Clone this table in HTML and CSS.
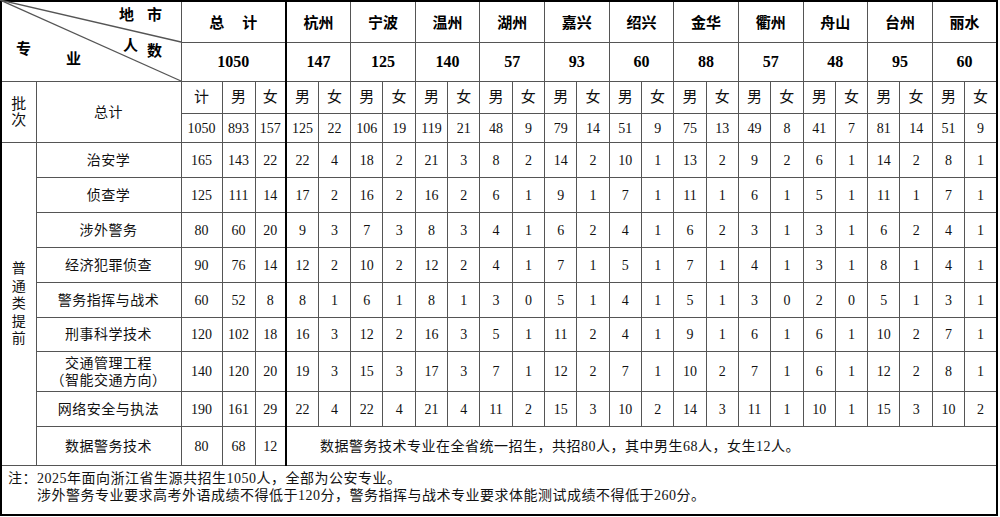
FILE: index.html
```html
<!DOCTYPE html>
<html lang="zh-CN">
<head>
<meta charset="utf-8">
<title>2025年浙江招生计划</title>
<link rel="stylesheet" href="styles.css">
</head>
<body>
<table class="plan">
<colgroup>
<col class="c-batch"><col class="c-major"><col class="c-tot"><col class="c-m"><col class="c-f">
<col span="22">
</colgroup>
<tr class="r-h1">
<td class="diag" colspan="2" rowspan="2">
<div class="diag-box">
<svg class="diag-lines" width="184" height="84" viewBox="0 0 184 84"><line x1="0" y1="0" x2="181" y2="42"/><line x1="0" y1="0" x2="181" y2="81"/></svg>
<span class="dl dl-di">地</span><span class="dl dl-shi">市</span>
<span class="dl dl-ren">人</span><span class="dl dl-shu">数</span>
<span class="dl dl-zhuan">专</span><span class="dl dl-ye">业</span>
</div>
</td>
<td class="hname sep" colspan="3">总<span class="gap"></span>计</td>
<td class="hname" colspan="2">杭州</td>
<td class="hname" colspan="2">宁波</td>
<td class="hname" colspan="2">温州</td>
<td class="hname" colspan="2">湖州</td>
<td class="hname" colspan="2">嘉兴</td>
<td class="hname" colspan="2">绍兴</td>
<td class="hname" colspan="2">金华</td>
<td class="hname" colspan="2">衢州</td>
<td class="hname" colspan="2">舟山</td>
<td class="hname" colspan="2">台州</td>
<td class="hname" colspan="2">丽水</td>
</tr>
<tr class="r-h2">
<td class="hnum sep" colspan="3">1050</td>
<td class="hnum" colspan="2">147</td>
<td class="hnum" colspan="2">125</td>
<td class="hnum" colspan="2">140</td>
<td class="hnum" colspan="2">57</td>
<td class="hnum" colspan="2">93</td>
<td class="hnum" colspan="2">60</td>
<td class="hnum" colspan="2">88</td>
<td class="hnum" colspan="2">57</td>
<td class="hnum" colspan="2">48</td>
<td class="hnum" colspan="2">95</td>
<td class="hnum" colspan="2">60</td>
</tr>
<tr class="r-h3">
<td class="batch" rowspan="2"><div class="vert vert-b">批次</div></td>
<td class="major" rowspan="2">总计</td>
<td class="sub">计</td><td class="sub">男</td><td class="sub sep">女</td>
<td class="sub">男</td><td class="sub">女</td>
<td class="sub">男</td><td class="sub">女</td>
<td class="sub">男</td><td class="sub">女</td>
<td class="sub">男</td><td class="sub">女</td>
<td class="sub">男</td><td class="sub">女</td>
<td class="sub">男</td><td class="sub">女</td>
<td class="sub">男</td><td class="sub">女</td>
<td class="sub">男</td><td class="sub">女</td>
<td class="sub">男</td><td class="sub">女</td>
<td class="sub">男</td><td class="sub">女</td>
<td class="sub">男</td><td class="sub">女</td>
</tr>
<tr class="r-h4">
<td>1050</td><td>893</td><td class="sep">157</td>
<td>125</td><td>22</td><td>106</td><td>19</td><td>119</td><td>21</td><td>48</td><td>9</td><td>79</td><td>14</td><td>51</td><td>9</td><td>75</td><td>13</td><td>49</td><td>8</td><td>41</td><td>7</td><td>81</td><td>14</td><td>51</td><td>9</td>
</tr>
<tr class="r-b">
<td class="batch" rowspan="9"><div class="vert">普通类提前</div></td>
<td class="major">治安学</td>
<td>165</td><td>143</td><td class="sep">22</td>
<td>22</td><td>4</td><td>18</td><td>2</td><td>21</td><td>3</td><td>8</td><td>2</td><td>14</td><td>2</td><td>10</td><td>1</td><td>13</td><td>2</td><td>9</td><td>2</td><td>6</td><td>1</td><td>14</td><td>2</td><td>8</td><td>1</td>
</tr>
<tr class="r-b">
<td class="major">侦查学</td>
<td>125</td><td>111</td><td class="sep">14</td>
<td>17</td><td>2</td><td>16</td><td>2</td><td>16</td><td>2</td><td>6</td><td>1</td><td>9</td><td>1</td><td>7</td><td>1</td><td>11</td><td>1</td><td>6</td><td>1</td><td>5</td><td>1</td><td>11</td><td>1</td><td>7</td><td>1</td>
</tr>
<tr class="r-b">
<td class="major">涉外警务</td>
<td>80</td><td>60</td><td class="sep">20</td>
<td>9</td><td>3</td><td>7</td><td>3</td><td>8</td><td>3</td><td>4</td><td>1</td><td>6</td><td>2</td><td>4</td><td>1</td><td>6</td><td>2</td><td>3</td><td>1</td><td>3</td><td>1</td><td>6</td><td>2</td><td>4</td><td>1</td>
</tr>
<tr class="r-b">
<td class="major">经济犯罪侦查</td>
<td>90</td><td>76</td><td class="sep">14</td>
<td>12</td><td>2</td><td>10</td><td>2</td><td>12</td><td>2</td><td>4</td><td>1</td><td>7</td><td>1</td><td>5</td><td>1</td><td>7</td><td>1</td><td>4</td><td>1</td><td>3</td><td>1</td><td>8</td><td>1</td><td>4</td><td>1</td>
</tr>
<tr class="r-b">
<td class="major">警务指挥与战术</td>
<td>60</td><td>52</td><td class="sep">8</td>
<td>8</td><td>1</td><td>6</td><td>1</td><td>8</td><td>1</td><td>3</td><td>0</td><td>5</td><td>1</td><td>4</td><td>1</td><td>5</td><td>1</td><td>3</td><td>0</td><td>2</td><td>0</td><td>5</td><td>1</td><td>3</td><td>1</td>
</tr>
<tr class="r-b6">
<td class="major">刑事科学技术</td>
<td>120</td><td>102</td><td class="sep">18</td>
<td>16</td><td>3</td><td>12</td><td>2</td><td>16</td><td>3</td><td>5</td><td>1</td><td>11</td><td>2</td><td>4</td><td>1</td><td>9</td><td>1</td><td>6</td><td>1</td><td>6</td><td>1</td><td>10</td><td>2</td><td>7</td><td>1</td>
</tr>
<tr class="r-b7">
<td class="major">交通管理工程<br>（智能交通方向）</td>
<td>140</td><td>120</td><td class="sep">20</td>
<td>19</td><td>3</td><td>15</td><td>3</td><td>17</td><td>3</td><td>7</td><td>1</td><td>12</td><td>2</td><td>7</td><td>1</td><td>10</td><td>2</td><td>7</td><td>1</td><td>6</td><td>1</td><td>12</td><td>2</td><td>8</td><td>1</td>
</tr>
<tr class="r-b">
<td class="major">网络安全与执法</td>
<td>190</td><td>161</td><td class="sep">29</td>
<td>22</td><td>4</td><td>22</td><td>4</td><td>21</td><td>4</td><td>11</td><td>2</td><td>15</td><td>3</td><td>10</td><td>2</td><td>14</td><td>3</td><td>11</td><td>1</td><td>10</td><td>1</td><td>15</td><td>3</td><td>10</td><td>2</td>
</tr>
<tr class="r-b9">
<td class="major">数据警务技术</td>
<td>80</td><td>68</td><td class="sep">12</td>
<td class="merged" colspan="22">数据警务技术专业在全省统一招生，共招80人，其中男生68人，女生12人。</td>
</tr>
<tr class="r-note">
<td class="note" colspan="27">
<div class="note-line">注：2025年面向浙江省生源共招生1050人，全部为公安专业。</div>
<div class="note-line note-indent">涉外警务专业要求高考外语成绩不得低于120分，警务指挥与战术专业要求体能测试成绩不得低于260分。</div>
</td>
</tr>
</table>
</body>
</html>
```

FILE: styles.css
```css
html, body {
  margin: 0;
  padding: 0;
  background: #fff;
}

body {
  font-family: "Liberation Serif", "Noto Sans CJK SC", serif;
  font-size: 14px;
  color: #111;
}

.plan {
  border-collapse: collapse;
  table-layout: fixed;
  width: 998px;
  border: 2px solid #000;
}

.c-batch { width: 35px; }
.c-major { width: 145px; }
.c-tot { width: 41px; }
.c-m { width: 33px; }
.c-f { width: 31px; }

.plan td {
  border: 1px solid #555;
  padding: 0;
  text-align: center;
  vertical-align: middle;
  line-height: 17px;
  white-space: nowrap;
  overflow: hidden;
}

.plan td.sep {
  border-right: 2px solid #000;
}

.r-h1 { height: 41px; }
.r-h2 { height: 39px; }
.r-h3 { height: 32px; }
.r-h4 { height: 29px; }
.r-b { height: 35px; }
.r-b6 { height: 34px; }
.r-b7 { height: 40px; }
.r-b9 { height: 39px; }
.r-note { height: 49px; }

.plan td.diag {
  overflow: visible;
  vertical-align: top;
}

.diag-box {
  position: relative;
  height: 79px;
}

.diag-lines {
  position: absolute;
  left: -2px;
  top: -2px;
  stroke: #555;
  stroke-width: 1.3;
}

.dl {
  position: absolute;
  font-size: 15px;
  font-weight: 700;
  line-height: 15px;
  color: #000;
}

.dl-di { left: 117px; top: 6px; }
.dl-shi { left: 145px; top: 6px; }
.dl-ren { left: 121px; top: 37px; }
.dl-shu { left: 145px; top: 42px; }
.dl-zhuan { left: 14px; top: 40px; }
.dl-ye { left: 64px; top: 50px; }

.plan td.hname {
  font-size: 15px;
  font-weight: 700;
  color: #000;
  padding-top: 3px;
}

.gap {
  display: inline-block;
  width: 18px;
}

.hnum {
  font-size: 16px;
  font-weight: 700;
  color: #000;
}

.sub {
  font-size: 15px;
}

.major {
  letter-spacing: 0.5px;
}

.vert {
  width: 14px;
  margin: 0 auto;
  white-space: normal;
  word-break: break-all;
  line-height: 17.5px;
  font-size: 14px;
}

.vert-b {
  width: 15px;
  font-size: 15px;
  line-height: 16px;
}

.plan td.batch {
  white-space: normal;
}

.plan td.merged {
  text-align: left;
  padding-left: 33px;
  letter-spacing: 0.5px;
}

.plan td.note {
  text-align: left;
  vertical-align: top;
  padding: 4px 0 0 6px;
  letter-spacing: 0.5px;
  border-top-color: #777;
}

.note-indent {
  padding-left: 29px;
}
```
